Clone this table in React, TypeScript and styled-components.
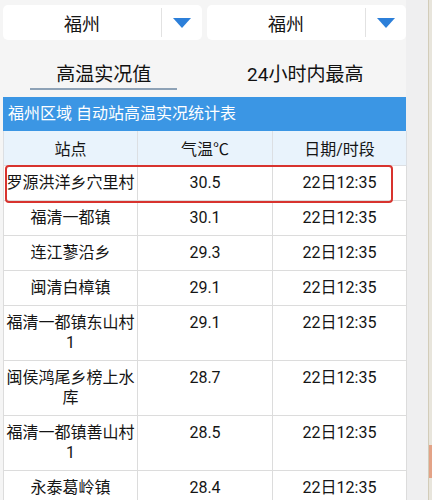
import React from "react";
import styled, { createGlobalStyle } from "styled-components";

const Global = createGlobalStyle`
  html, body { margin: 0; padding: 0; background: #f5f5f5; }
  body { font-family: Roboto, "Noto Sans CJK SC", sans-serif; color: #111; }
`;

const Page = styled.div`
  display: flex;
  align-items: stretch;
  height: 500px;
  overflow: hidden;
  background: #f5f5f5;
`;

const Main = styled.div`
  width: 403px;
  flex-shrink: 0;
  padding-left: 3px;
`;

const Gutter = styled.div`
  width: 22px;
  flex-shrink: 0;
  background: #efeff0;
`;

const Edge = styled.div`
  flex: 1;
  background: #e8e5dc;
  border-left: 1px solid #d2ccb9;
  display: flex;
  flex-direction: column;
`;

const EdgeMark = styled.div`
  margin-top: 445px;
  height: 33px;
  background: #e3a387;
`;

const SelectRow = styled.div`
  display: flex;
  gap: 5px;
  padding-top: 5px;
`;

const Select = styled.div`
  flex: 1;
  height: 35px;
  background: #ffffff;
  border-radius: 5px;
  display: flex;
  align-items: center;
`;

const SelectLabel = styled.div`
  flex: 1;
  text-align: center;
  font-size: 18px;
  color: #151515;
`;

const SelectDivider = styled.div`
  width: 1px;
  height: 29px;
  background: #e2e2e2;
`;

const SelectArrow = styled.div`
  width: 40px;
  display: flex;
  justify-content: center;
  align-items: center;
`;

const TabRow = styled.div`
  display: flex;
  height: 57px;
`;

const Tab = styled.div`
  flex: 1;
  display: flex;
  flex-direction: column;
  align-items: center;
  padding-top: 24px;
`;

const TabLabel = styled.div`
  font-size: 19px;
  line-height: 22px;
  color: #111;
`;

const TabLine = styled.div<{ $active: boolean }>`
  margin-top: 2px;
  width: 147px;
  height: 2px;
  background: ${(p) => (p.$active ? "#8ea2b6" : "transparent")};
`;

const TableWrap = styled.div`
  position: relative;
`;

const TitleBar = styled.div`
  height: 34px;
  background: #3b96e4;
  color: #ffffff;
  font-size: 16px;
  line-height: 34px;
  padding-left: 5px;
`;

const Table = styled.table`
  width: 403px;
  border-collapse: collapse;
  table-layout: fixed;
  background: #ffffff;
`;

const HeadCell = styled.th`
  height: 34px;
  padding: 0;
  background: #e9f3fc;
  border: 1px solid #dcdfe3;
  border-top: none;
  font-weight: normal;
  font-size: 16px;
  color: #151515;
`;

const Cell = styled.td`
  padding: 7px 0;
  border: 1px solid #dcdcdc;
  font-size: 16px;
  line-height: 20px;
  color: #151515;
  text-align: center;
  vertical-align: top;
  word-break: break-all;
`;

const Highlight = styled.div`
  position: absolute;
  left: 2px;
  top: 68px;
  width: 384px;
  height: 34px;
  border: 2px solid #d8332e;
  border-radius: 4px;
  pointer-events: none;
`;

const Arrow = () => (
  <svg width="18" height="10" viewBox="0 0 18 10">
    <path d="M0 0 H18 L9 10 Z" fill="#2c7fd9" />
  </svg>
);

const rows = [
  ["罗源洪洋乡穴里村", "30.5", "22日12:35"],
  ["福清一都镇", "30.1", "22日12:35"],
  ["连江蓼沿乡", "29.3", "22日12:35"],
  ["闽清白樟镇", "29.1", "22日12:35"],
  ["福清一都镇东山村1", "29.1", "22日12:35"],
  ["闽侯鸿尾乡榜上水库", "28.7", "22日12:35"],
  ["福清一都镇善山村1", "28.5", "22日12:35"],
  ["永泰葛岭镇", "28.4", "22日12:35"],
];

export default function App() {
  return (
    <>
      <Global />
      <Page>
        <Main>
          <SelectRow>
            {["福州", "福州"].map((c, i) => (
              <Select key={i}>
                <SelectLabel>{c}</SelectLabel>
                <SelectDivider />
                <SelectArrow>
                  <Arrow />
                </SelectArrow>
              </Select>
            ))}
          </SelectRow>
          <TabRow>
            <Tab>
              <TabLabel>高温实况值</TabLabel>
              <TabLine $active />
            </Tab>
            <Tab>
              <TabLabel>24小时内最高</TabLabel>
              <TabLine $active={false} />
            </Tab>
          </TabRow>
          <TableWrap>
            <TitleBar>福州区域 自动站高温实况统计表</TitleBar>
            <Table>
              <colgroup>
                <col style={{ width: 134 }} />
                <col style={{ width: 135 }} />
                <col style={{ width: 134 }} />
              </colgroup>
              <thead>
                <tr>
                  <HeadCell>站点</HeadCell>
                  <HeadCell>气温℃</HeadCell>
                  <HeadCell>日期/时段</HeadCell>
                </tr>
              </thead>
              <tbody>
                {rows.map((r, i) => (
                  <tr key={i}>
                    <Cell>{r[0]}</Cell>
                    <Cell>{r[1]}</Cell>
                    <Cell>{r[2]}</Cell>
                  </tr>
                ))}
              </tbody>
            </Table>
            <Highlight />
          </TableWrap>
        </Main>
        <Gutter />
        <Edge>
          <EdgeMark />
        </Edge>
      </Page>
    </>
  );
}
